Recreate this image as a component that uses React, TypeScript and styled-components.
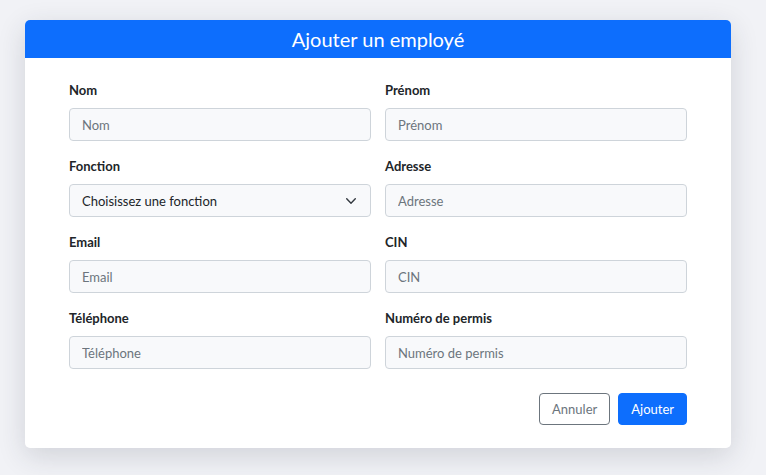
import styled, { createGlobalStyle } from 'styled-components';

const GlobalStyle = createGlobalStyle`
	* {
		box-sizing: border-box;
	}
	body {
		margin: 0;
		background: #f1f2f6;
		font-family: Lato, "Noto Sans", sans-serif;
		color: #212529;
	}
`

const Page = styled.div`
	padding: 20px 0 28px 25px;
`

const Card = styled.div`
	width: 706px;
	background: #fff;
	border-radius: 5px;
	box-shadow: 0 8px 28px rgba(40, 44, 60, 0.16);
	overflow: hidden;
`

const Header = styled.h2`
	margin: 0;
	height: 38px;
	background: #0d6efd;
	color: #fff;
	font-size: 20px;
	font-weight: 400;
	line-height: 38px;
	text-align: center;
`

const Form = styled.form`
	padding: 22px 44px 23px 44px;
`

const Grid = styled.div`
	display: grid;
	grid-template-columns: 1fr 1fr;
	column-gap: 14px;
	row-gap: 15px;
`

const Field = styled.div`
	display: flex;
	flex-direction: column;
`

const Label = styled.label`
	font-size: 13px;
	font-weight: 700;
	line-height: 20px;
	margin-bottom: 8px;
`

const Input = styled.input`
	height: 33px;
	padding: 0 12px;
	border: 1px solid #ced4da;
	border-radius: 4px;
	background: #f8f9fb;
	font-family: inherit;
	font-size: 13px;
	color: #212529;

	&::placeholder {
		color: #6c757d;
	}
`

const SelectBox = styled.div`
	position: relative;
	height: 33px;
	display: flex;
	align-items: center;
	padding: 0 12px;
	border: 1px solid #ced4da;
	border-radius: 4px;
	background: #f8f9fb;
	font-size: 13px;
	color: #212529;
`

const Chevron = styled.svg`
	position: absolute;
	right: 13px;
	top: 11px;
`

const Actions = styled.div`
	display: flex;
	justify-content: flex-end;
	gap: 8px;
	margin-top: 24px;
`

const Button = styled.button<{ $variant: 'primary' | 'outline' }>`
	height: 32px;
	padding: 0 12px;
	border-radius: 4px;
	font-family: inherit;
	font-size: 13px;
	cursor: pointer;
	border: 1px solid ${({ $variant }) => ($variant === 'primary' ? '#0d6efd' : '#6c757d')};
	background: ${({ $variant }) => ($variant === 'primary' ? '#0d6efd' : '#fff')};
	color: ${({ $variant }) => ($variant === 'primary' ? '#fff' : '#6c757d')};
`

const fields = [
	{ name: 'nom', label: 'Nom' },
	{ name: 'prenom', label: 'Prénom' },
	{ name: 'fonction', label: 'Fonction', select: true },
	{ name: 'adresse', label: 'Adresse' },
	{ name: 'email', label: 'Email' },
	{ name: 'cin', label: 'CIN' },
	{ name: 'telephone', label: 'Téléphone' },
	{ name: 'permis', label: 'Numéro de permis' },
]

export default function App() {
	return (
		<>
			<GlobalStyle />
			<Page>
				<Card>
					<Header>Ajouter un employé</Header>
					<Form onSubmit={(e) => e.preventDefault()}>
						<Grid>
							{fields.map((f) => (
								<Field key={f.name}>
									<Label htmlFor={f.name}>{f.label}</Label>
									{f.select ? (
										<SelectBox id={f.name}>
											Choisissez une fonction
											<Chevron width="12" height="10" viewBox="0 0 16 14">
												<path d="M2 4l6 6 6-6" fill="none" stroke="#343a40" strokeWidth="2" strokeLinecap="round" strokeLinejoin="round" />
											</Chevron>
										</SelectBox>
									) : (
										<Input id={f.name} placeholder={f.label} />
									)}
								</Field>
							))}
						</Grid>
						<Actions>
							<Button type="button" $variant="outline">Annuler</Button>
							<Button type="submit" $variant="primary">Ajouter</Button>
						</Actions>
					</Form>
				</Card>
			</Page>
		</>
	);
}
